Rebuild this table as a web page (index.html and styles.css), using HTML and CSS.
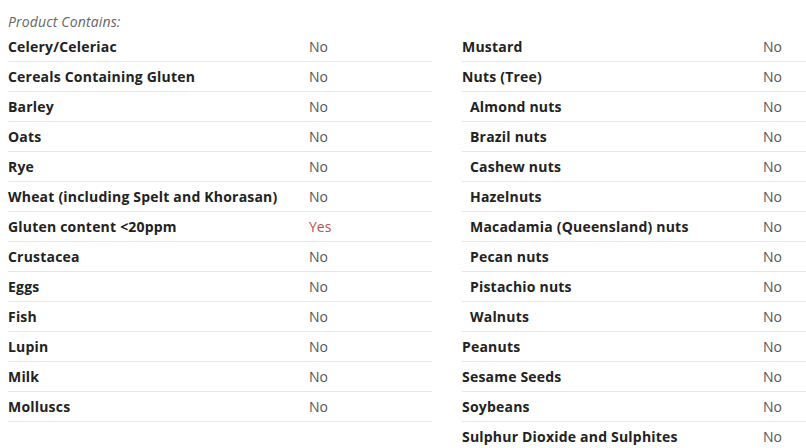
FILE: index.html
```html
<!DOCTYPE html>
<html>
<head>
<meta charset="utf-8">
<link rel="stylesheet" href="styles.css">
</head>
<body>
<div class="page">
  <p class="caption">Product Contains:</p>
  <div class="columns">
    <table class="allergens">
      <tr><th>Celery/Celeriac</th><td>No</td></tr>
      <tr><th>Cereals Containing Gluten</th><td>No</td></tr>
      <tr><th>Barley</th><td>No</td></tr>
      <tr><th>Oats</th><td>No</td></tr>
      <tr><th>Rye</th><td>No</td></tr>
      <tr><th>Wheat (including Spelt and Khorasan)</th><td>No</td></tr>
      <tr><th>Gluten content &lt;20ppm</th><td class="yes">Yes</td></tr>
      <tr><th>Crustacea</th><td>No</td></tr>
      <tr><th>Eggs</th><td>No</td></tr>
      <tr><th>Fish</th><td>No</td></tr>
      <tr><th>Lupin</th><td>No</td></tr>
      <tr><th>Milk</th><td>No</td></tr>
      <tr><th>Molluscs</th><td>No</td></tr>
    </table>
    <table class="allergens">
      <tr><th>Mustard</th><td>No</td></tr>
      <tr><th>Nuts (Tree)</th><td>No</td></tr>
      <tr><th class="sub">Almond nuts</th><td>No</td></tr>
      <tr><th class="sub">Brazil nuts</th><td>No</td></tr>
      <tr><th class="sub">Cashew nuts</th><td>No</td></tr>
      <tr><th class="sub">Hazelnuts</th><td>No</td></tr>
      <tr><th class="sub">Macadamia (Queensland) nuts</th><td>No</td></tr>
      <tr><th class="sub">Pecan nuts</th><td>No</td></tr>
      <tr><th class="sub">Pistachio nuts</th><td>No</td></tr>
      <tr><th class="sub">Walnuts</th><td>No</td></tr>
      <tr><th>Peanuts</th><td>No</td></tr>
      <tr><th>Sesame Seeds</th><td>No</td></tr>
      <tr><th>Soybeans</th><td>No</td></tr>
      <tr><th>Sulphur Dioxide and Sulphites</th><td>No</td></tr>
    </table>
  </div>
</div>
</body>
</html>
```
FILE: styles.css
```css
html, body {
  margin: 0;
  padding: 0;
  background: #fff;
  overflow: hidden;
}
body {
  font-family: "Open Sans", "Liberation Sans", sans-serif;
  font-size: 14px;
  color: #333;
}
.page {
  padding: 11px 0 0 8px;
  width: 798px;
}
.caption {
  margin: 0;
  height: 21px;
  line-height: 21px;
  font-style: italic;
  color: #666;
  letter-spacing: 0.15px;
}
.columns {
  display: grid;
  grid-template-columns: 424px 1fr;
  column-gap: 30px;
  align-items: start;
}
.allergens {
  width: 100%;
  border-collapse: collapse;
  table-layout: fixed;
}
.allergens th,
.allergens td {
  height: 29px;
  padding: 0;
  text-align: left;
  vertical-align: middle;
  border-bottom: 1px solid #e6e6e6;
}
.allergens th {
  width: 301px;
  font-weight: 700;
  color: #222;
  letter-spacing: 0.2px;
  white-space: nowrap;
}
.allergens th.sub {
  padding-left: 8px;
}
.allergens td {
  color: #555;
}
.allergens td.yes {
  color: #c0504d;
}
```
